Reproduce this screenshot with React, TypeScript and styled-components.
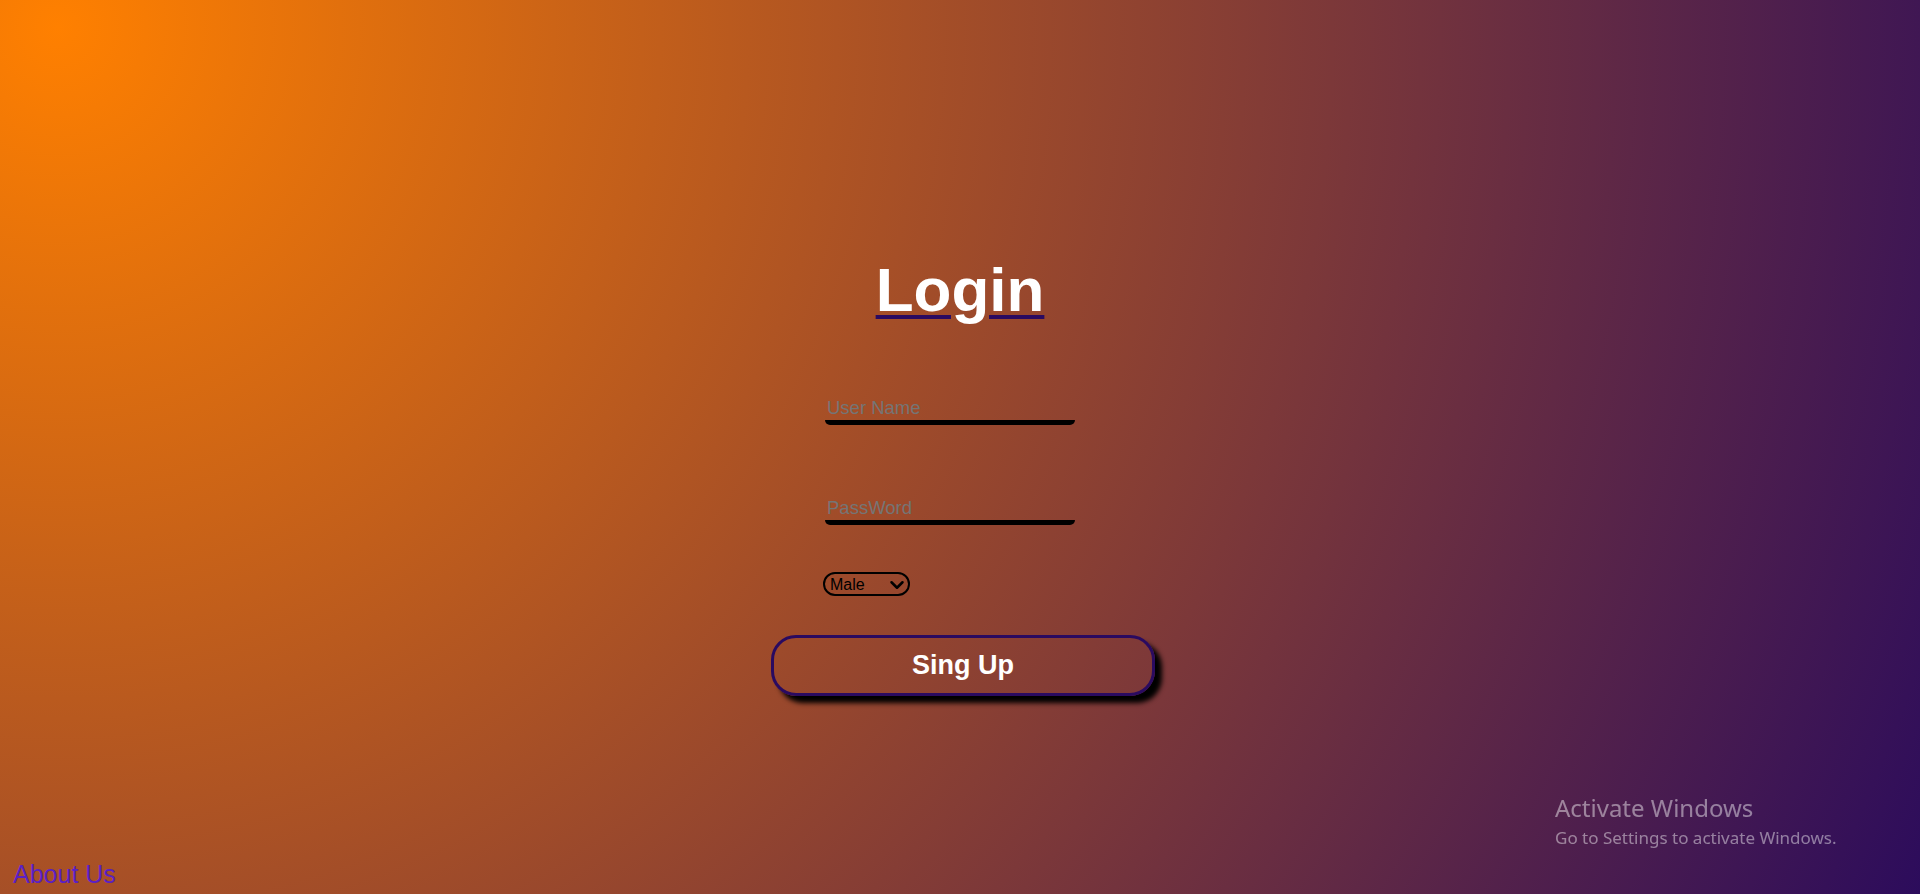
import React from "react";
import styled, { createGlobalStyle } from "styled-components";
import { ChevronDown } from "lucide-react";

const GlobalStyle = createGlobalStyle`
  html, body {
    margin: 0;
    padding: 0;
    height: 100%;
  }
  body {
    font-family: "Liberation Sans", Arial, sans-serif;
    overflow: hidden;
  }
`;

const Page = styled.div`
  min-height: 100vh;
  display: flex;
  flex-direction: column;
  background: radial-gradient(circle farthest-corner at 3% 3%, #ff8000 0%, #2c0c5c 100%);
`;

const Main = styled.main`
  flex: 1;
  display: flex;
  flex-direction: column;
  align-items: center;
  padding-top: 254px;
`;

const Title = styled.h1`
  margin: 0;
  font-size: 62px;
  line-height: 72px;
  font-weight: 700;
  color: #ffffff;
  text-decoration: underline;
  text-decoration-color: #2a0a60;
  text-decoration-thickness: 4px;
  text-underline-offset: 4px;
`;

const Fields = styled.form`
  width: 270px;
  display: flex;
  flex-direction: column;
  align-items: flex-start;
  margin-top: 70px;
`;

const TextInput = styled.input<{ $gap: number }>`
  box-sizing: border-box;
  width: 250px;
  height: 29px;
  padding: 1px 2px;
  margin: 0 0 ${(p) => p.$gap}px 0;
  border: none;
  border-bottom: 5px solid #000;
  border-radius: 5px;
  background: transparent;
  font-family: "Liberation Sans", Arial, sans-serif;
  font-size: 18.5px;
  color: #000;
  outline: none;
  &::placeholder {
    color: #757575;
  }
`;

const SelectWrap = styled.div`
  position: relative;
  display: inline-flex;
  margin-left: -2px;
`;

const GenderSelect = styled.select`
  box-sizing: border-box;
  width: 87px;
  height: 24px;
  padding: 0 24px 0 5px;
  border: 2px solid #000;
  border-radius: 12px;
  background: transparent;
  appearance: none;
  -webkit-appearance: none;
  font-family: "Liberation Sans", Arial, sans-serif;
  font-size: 16px;
  color: #000;
  outline: none;
`;

const SelectArrow = styled(ChevronDown)`
  position: absolute;
  right: 2px;
  top: 2px;
  pointer-events: none;
  color: #000;
`;

const SubmitButton = styled.button`
  box-sizing: border-box;
  width: 384px;
  height: 61px;
  margin-top: 39px;
  margin-left: 6px;
  border: 3px solid #2a0a60;
  border-radius: 25px;
  background: transparent;
  box-shadow: 7px 7px 5px #000;
  font-family: "Liberation Sans", Arial, sans-serif;
  font-size: 27px;
  font-weight: 700;
  color: #fff;
  cursor: pointer;
`;

const Footer = styled.footer`
  padding: 0 0 5px 13px;
`;

const AboutLink = styled.a`
  font-size: 25px;
  color: #5a20c4;
  text-decoration: none;
`;

const Watermark = styled.div`
  position: fixed;
  left: 1555px;
  top: 792px;
  font-family: "Segoe UI", "Noto Sans", "Open Sans", sans-serif;
  color: rgba(255, 255, 255, 0.45);
  pointer-events: none;
`;

const WatermarkTitle = styled.div`
  font-size: 24px;
  line-height: 32px;
`;

const WatermarkText = styled.div`
  margin-top: 2px;
  font-size: 17px;
  line-height: 24px;
`;

export default function App() {
  return (
    <>
      <GlobalStyle />
      <Page>
        <Main>
          <Title>Login</Title>
          <Fields onSubmit={(e) => e.preventDefault()}>
            <TextInput $gap={71} type="text" placeholder="User Name" />
            <TextInput $gap={47} type="password" placeholder="PassWord" />
            <SelectWrap>
              <GenderSelect defaultValue="Male">
                <option>Male</option>
                <option>Female</option>
              </GenderSelect>
              <SelectArrow size={22} strokeWidth={2.75} />
            </SelectWrap>
          </Fields>
          <SubmitButton type="button">Sing Up</SubmitButton>
        </Main>
        <Footer>
          <AboutLink href="#">About Us</AboutLink>
        </Footer>
      </Page>
      <Watermark>
        <WatermarkTitle>Activate Windows</WatermarkTitle>
        <WatermarkText>Go to Settings to activate Windows.</WatermarkText>
      </Watermark>
    </>
  );
}
